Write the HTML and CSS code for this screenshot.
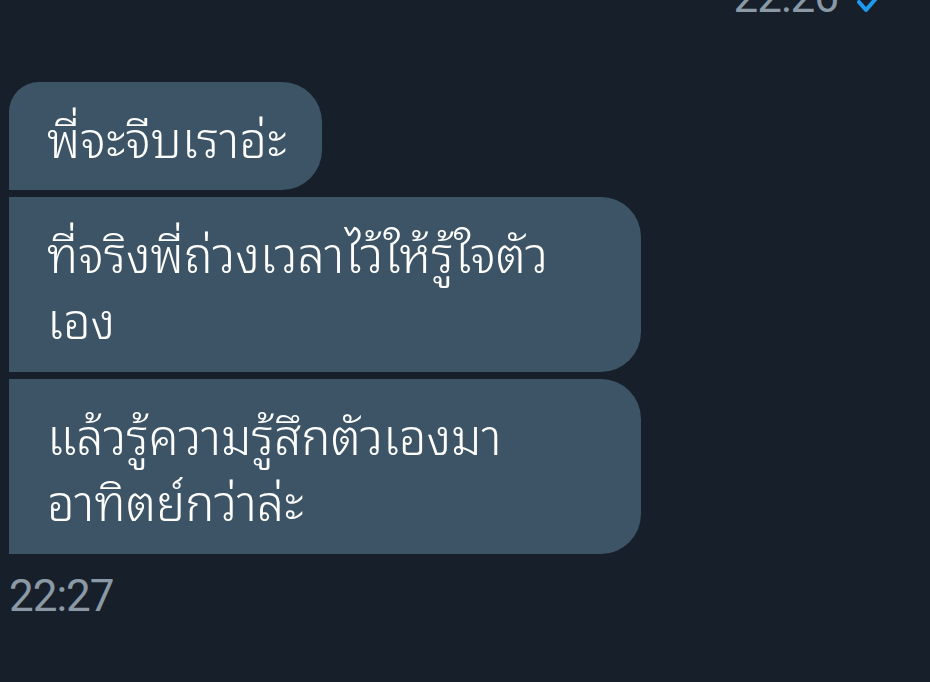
FILE: index.html
```html
<!DOCTYPE html>
<html lang="th">
<head>
<meta charset="utf-8">
<link rel="stylesheet" href="styles.css">
</head>
<body>
<div class="chat">
  <div class="sent-meta">
    <span class="time time-sent">22:26</span>
    <svg class="check" width="26" height="16" viewBox="0 0 26 16"><path d="M3 4 L10 12 L23 -3" fill="none" stroke="#1d9bf0" stroke-width="4" stroke-linejoin="round" stroke-linecap="round"/></svg>
  </div>
  <div class="group">
    <div class="bubble first">พี่จะจีบเราอ่ะ</div>
    <div class="bubble wide">ที่จริงพี่ถ่วงเวลาไว้ให้รู้ใจตัว<br>เอง</div>
    <div class="bubble wide last">แล้วรู้ความรู้สึกตัวเองมา<br>อาทิตย์กว่าล่ะ</div>
  </div>
  <div class="time time-recv">22:27</div>
</div>
</body>
</html>
```
FILE: styles.css
```css
html, body {
  margin: 0;
  padding: 0;
  background: #17202a;
  width: 930px;
  height: 682px;
  overflow: hidden;
}
.chat {
  font-family: "Noto Sans Thai Looped", "Noto Sans Thai", "Noto Sans", Roboto, sans-serif;
  padding: 0 9px;
  display: flex;
  flex-direction: column;
}
.sent-meta {
  height: 14px;
  display: flex;
  justify-content: flex-end;
  align-items: flex-end;
  gap: 18px;
  padding-right: 39px;
  margin-bottom: 68px;
  overflow: hidden;
}
.time {
  font-family: Roboto, "Noto Sans", sans-serif;
  color: #8b98a5;
  font-size: 44px;
  letter-spacing: -1px;
  line-height: 44px;
}
.time-sent {
  margin-bottom: -5px;
}
.check {
  flex: none;
  margin-bottom: 0;
}
.group {
  display: flex;
  flex-direction: column;
  align-items: flex-start;
  gap: 7px;
}
.bubble {
  background: #3d5466;
  color: #ffffff;
  font-size: 49px;
  font-weight: 350;
  line-height: 66px;
  padding: 21px 38px;
  border-radius: 0 40px 40px 0;
  white-space: nowrap;
}
.bubble.first {
  padding-right: 35px;
  border-radius: 30px 40px 40px 0;
}
.wide {
  width: 556px;
  padding: 21px 38px 22px;
}
.time-recv {
  margin-top: 20px;
}
```
